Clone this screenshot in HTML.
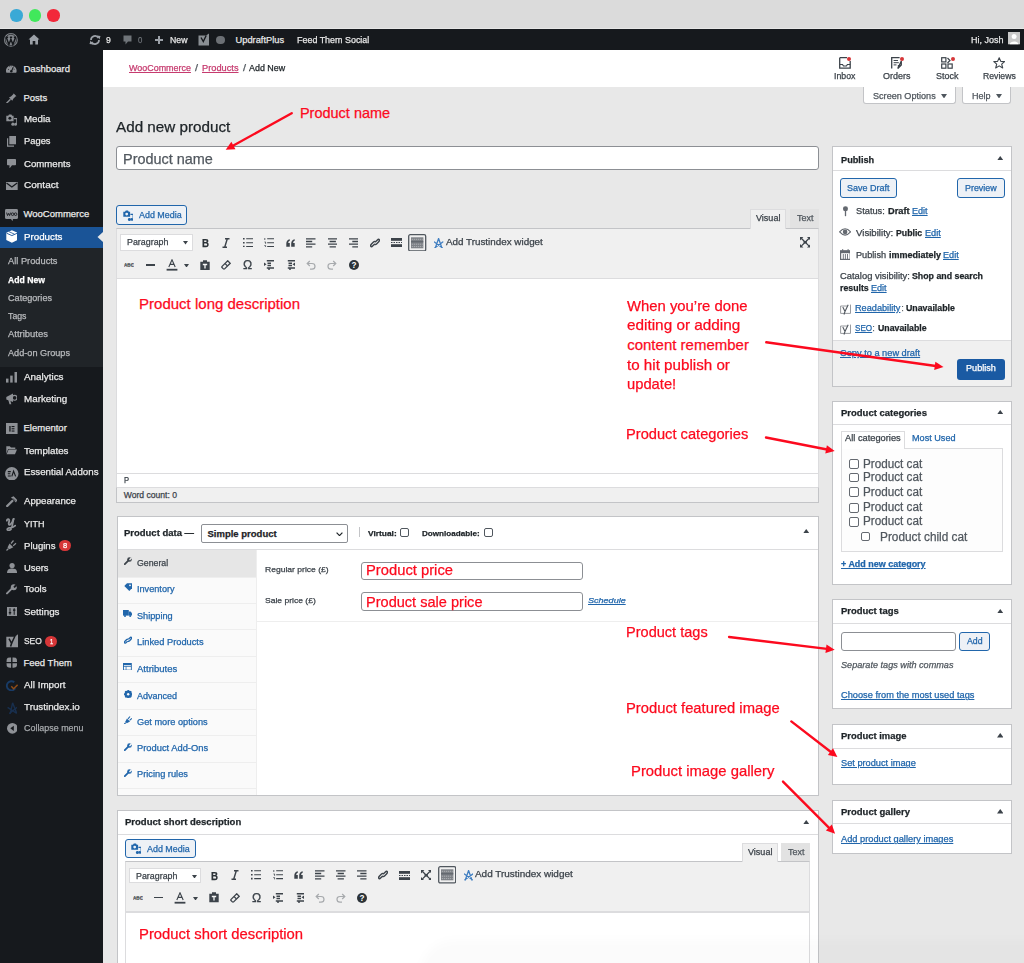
<!DOCTYPE html>
<html><head><meta charset="utf-8">
<style>
*{box-sizing:border-box;margin:0;padding:0}
html,body{width:1024px;height:963px;overflow:hidden}
body{font-family:"Liberation Sans",sans-serif;background:#e8e8e8;position:relative}
.a{position:absolute;white-space:nowrap;-webkit-text-stroke:0.25px currentColor}
svg.a{-webkit-text-stroke:0}

</style></head><body>
<div class="a" style="left:0.00px;top:0.00px;width:1024.00px;height:29.30px;background:#dbdbdb"></div>
<div class="a" style="left:0.00px;top:27.80px;width:1024.00px;height:1.50px;background:#e6e6e6"></div>
<div class="a" style="left:10.40px;top:9.40px;width:12.40px;height:12.40px;border-radius:50%;background:#3aa9d6"></div>
<div class="a" style="left:28.80px;top:9.40px;width:12.40px;height:12.40px;border-radius:50%;background:#41e85b"></div>
<div class="a" style="left:47.20px;top:9.40px;width:12.40px;height:12.40px;border-radius:50%;background:#f2283a"></div>
<div class="a" style="left:0.00px;top:29.30px;width:1024.00px;height:20.70px;background:#16191d"></div>
<svg class="a" style="left:4.10px;top:32.90px;" width="13.80" height="13.80" viewBox="0 0 13.8 13.8"><circle cx="6.9" cy="6.9" r="6.9" fill="#85898e"/><circle cx="6.9" cy="6.9" r="5.6" fill="none" stroke="#16191d" stroke-width="0.7"/><path d="M2.2 4.3 L4.9 11.6 L6.9 6.3 L8.9 11.6 L11.6 4.3 M1.6 4.3 H4.2 M5.8 4.3 H8.2 M9.8 4.3 H12" fill="none" stroke="#16191d" stroke-width="1.5"/></svg>
<svg class="a" style="left:28.00px;top:33.50px;" width="12.00" height="11.00" viewBox="0 0 12 11"><path d="M6 0.5 L11.5 5.5 L10 5.5 L10 10.5 L7.3 10.5 L7.3 7 L4.7 7 L4.7 10.5 L2 10.5 L2 5.5 L0.5 5.5 Z" fill="#9ca1a8"/></svg>
<svg class="a" style="left:89.00px;top:34.00px;" width="12.00" height="12.00" viewBox="0 0 12 12"><path d="M2 6 A4 4 0 0 1 9.5 4" fill="none" stroke="#9ca1a8" stroke-width="1.7"/><path d="M10 6 A4 4 0 0 1 2.5 8" fill="none" stroke="#9ca1a8" stroke-width="1.7"/><path d="M8 1.5 L11.5 2 L10.5 5.5 Z M4 10.5 L0.5 10 L1.5 6.5 Z" fill="#9ca1a8"/></svg>
<div class="a" style="left:105.70px;top:36.00px;font-size:9.30px;line-height:9.30px;color:#e8e8e8;transform:scaleX(0.9283);transform-origin:0 0;">9</div>
<svg class="a" style="left:122.50px;top:34.50px;" width="9.00" height="11.00" viewBox="0 0 9 11"><path d="M0.5 0.5 H8.5 V6.5 H5 L2.5 9.5 V6.5 H0.5 Z" fill="#6f7479"/></svg>
<div class="a" style="left:137.70px;top:36.00px;font-size:9.30px;line-height:9.30px;color:#6f7479;transform:scaleX(0.8316);transform-origin:0 0;">0</div>
<div class="a" style="left:154.90px;top:38.90px;width:8.40px;height:1.80px;background:#9ca1a8"></div>
<div class="a" style="left:158.20px;top:35.60px;width:1.80px;height:8.40px;background:#9ca1a8"></div>
<div class="a" style="left:169.50px;top:36.00px;font-size:9.30px;line-height:9.30px;color:#e8e8e8;transform:scaleX(0.9395);transform-origin:0 0;">New</div>
<svg class="a" style="left:197.80px;top:33.00px;" width="11.50" height="13.00" viewBox="0 0 11.5 13"><path d="M0.5 2.5 H8 L11 0.5 V12.5 H0.5 Z" fill="#8a8f94"/><path d="M3 4.5 L5.3 8.5 L8.2 2.5" fill="none" stroke="#16191d" stroke-width="1.4"/></svg>
<div class="a" style="left:216.20px;top:35.90px;width:8.40px;height:8.40px;border-radius:50%;background:#6c7075"></div>
<div class="a" style="left:235.50px;top:36.00px;font-size:9.30px;line-height:9.30px;color:#e8e8e8;">UpdraftPlus</div>
<div class="a" style="left:297.40px;top:36.00px;font-size:9.30px;line-height:9.30px;color:#e8e8e8;transform:scaleX(0.9601);transform-origin:0 0;">Feed Them Social</div>
<div class="a" style="left:970.90px;top:36.00px;font-size:9.30px;line-height:9.30px;color:#e8e8e8;transform:scaleX(0.9645);transform-origin:0 0;">Hi, Josh</div>
<svg class="a" style="left:1007.50px;top:32.30px;" width="12.30" height="12.30" viewBox="0 0 12.3 12.3"><rect width="12.3" height="12.3" fill="#c9c9c9"/><circle cx="6.15" cy="4.6" r="2.5" fill="#fff"/><path d="M1.8 12.3 C2 8.5 10.3 8.5 10.5 12.3 Z" fill="#fff"/></svg>
<div class="a" style="left:0.00px;top:50.00px;width:103.00px;height:913.00px;background:#16191d"></div>
<div class="a" style="left:0.00px;top:248.00px;width:103.00px;height:118.50px;background:#202428"></div>
<div class="a" style="left:0.00px;top:227.00px;width:103.00px;height:21.00px;background:#1a5497"></div>
<svg class="a" style="left:97.00px;top:232.00px;" width="6.00" height="10.00" viewBox="0 0 6 10"><path d="M6 0 L0.5 5 L6 10 Z" fill="#e8e8e8"/></svg>
<div class="a" style="left:23.50px;top:64.00px;font-size:9.50px;line-height:9.50px;color:#eaeaea;">Dashboard</div>
<div class="a" style="left:23.50px;top:93.00px;font-size:9.50px;line-height:9.50px;color:#eaeaea;">Posts</div>
<div class="a" style="left:23.50px;top:114.00px;font-size:9.50px;line-height:9.50px;color:#eaeaea;transform:scaleX(1.0237);transform-origin:0 0;">Media</div>
<div class="a" style="left:23.50px;top:136.00px;font-size:9.50px;line-height:9.50px;color:#eaeaea;transform:scaleX(0.9839);transform-origin:0 0;">Pages</div>
<div class="a" style="left:23.50px;top:159.00px;font-size:9.50px;line-height:9.50px;color:#eaeaea;transform:scaleX(1.0124);transform-origin:0 0;">Comments</div>
<div class="a" style="left:23.50px;top:180.00px;font-size:9.50px;line-height:9.50px;color:#eaeaea;transform:scaleX(1.0539);transform-origin:0 0;">Contact</div>
<div class="a" style="left:23.50px;top:209.00px;font-size:9.50px;line-height:9.50px;color:#eaeaea;">WooCommerce</div>
<div class="a" style="left:23.50px;top:232.00px;font-size:9.50px;line-height:9.50px;color:#ffffff;transform:scaleX(1.0270);transform-origin:0 0;">Products</div>
<div class="a" style="left:23.50px;top:372.00px;font-size:9.50px;line-height:9.50px;color:#eaeaea;transform:scaleX(1.0392);transform-origin:0 0;">Analytics</div>
<div class="a" style="left:23.50px;top:394.00px;font-size:9.50px;line-height:9.50px;color:#eaeaea;transform:scaleX(1.0356);transform-origin:0 0;">Marketing</div>
<div class="a" style="left:23.50px;top:423.00px;font-size:9.50px;line-height:9.50px;color:#eaeaea;">Elementor</div>
<div class="a" style="left:23.50px;top:446.00px;font-size:9.50px;line-height:9.50px;color:#eaeaea;transform:scaleX(1.0277);transform-origin:0 0;">Templates</div>
<div class="a" style="left:23.50px;top:467.00px;font-size:9.50px;line-height:9.50px;color:#eaeaea;transform:scaleX(1.0222);transform-origin:0 0;">Essential Addons</div>
<div class="a" style="left:23.50px;top:496.00px;font-size:9.50px;line-height:9.50px;color:#eaeaea;transform:scaleX(1.0130);transform-origin:0 0;">Appearance</div>
<div class="a" style="left:23.50px;top:519.00px;font-size:9.50px;line-height:9.50px;color:#eaeaea;transform:scaleX(0.9473);transform-origin:0 0;">YITH</div>
<div class="a" style="left:23.50px;top:541.00px;font-size:9.50px;line-height:9.50px;color:#eaeaea;transform:scaleX(1.0109);transform-origin:0 0;">Plugins</div>
<div class="a" style="left:23.50px;top:563.00px;font-size:9.50px;line-height:9.50px;color:#eaeaea;transform:scaleX(0.9877);transform-origin:0 0;">Users</div>
<div class="a" style="left:23.50px;top:584.00px;font-size:9.50px;line-height:9.50px;color:#eaeaea;transform:scaleX(1.0147);transform-origin:0 0;">Tools</div>
<div class="a" style="left:23.50px;top:607.00px;font-size:9.50px;line-height:9.50px;color:#eaeaea;transform:scaleX(1.0343);transform-origin:0 0;">Settings</div>
<div class="a" style="left:23.50px;top:636.00px;font-size:9.50px;line-height:9.50px;color:#eaeaea;transform:scaleX(0.8872);transform-origin:0 0;">SEO</div>
<div class="a" style="left:23.50px;top:658.00px;font-size:9.50px;line-height:9.50px;color:#eaeaea;">Feed Them</div>
<div class="a" style="left:23.50px;top:680.00px;font-size:9.50px;line-height:9.50px;color:#eaeaea;transform:scaleX(1.0344);transform-origin:0 0;">All Import</div>
<div class="a" style="left:23.50px;top:702.00px;font-size:9.50px;line-height:9.50px;color:#eaeaea;transform:scaleX(1.0326);transform-origin:0 0;">Trustindex.io</div>
<div class="a" style="left:23.50px;top:723.00px;font-size:9.50px;line-height:9.50px;color:#a7aaad;transform:scaleX(0.9390);transform-origin:0 0;">Collapse menu</div>
<div class="a" style="left:8.00px;top:257.00px;font-size:9.00px;line-height:9.00px;color:#b8babd;transform:scaleX(1.0309);transform-origin:0 0;">All Products</div>
<div class="a" style="left:8.00px;top:276.00px;font-size:9.00px;line-height:9.00px;color:#ffffff;font-weight:bold;transform:scaleX(0.9605);transform-origin:0 0;">Add New</div>
<div class="a" style="left:8.00px;top:294.00px;font-size:9.00px;line-height:9.00px;color:#b8babd;transform:scaleX(1.0109);transform-origin:0 0;">Categories</div>
<div class="a" style="left:8.00px;top:312.00px;font-size:9.00px;line-height:9.00px;color:#b8babd;transform:scaleX(0.9733);transform-origin:0 0;">Tags</div>
<div class="a" style="left:8.00px;top:330.00px;font-size:9.00px;line-height:9.00px;color:#b8babd;transform:scaleX(1.0522);transform-origin:0 0;">Attributes</div>
<div class="a" style="left:8.00px;top:349.00px;font-size:9.00px;line-height:9.00px;color:#b8babd;transform:scaleX(1.0158);transform-origin:0 0;">Add-on Groups</div>
<div class="a" style="left:59.00px;top:539.50px;width:11.50px;height:11.50px;border-radius:50%;background:#d63638"></div>
<div class="a" style="left:62.70px;top:542.00px;font-size:7.50px;line-height:7.50px;color:#fff;transform:scaleX(1.0072);transform-origin:0 0;">8</div>
<div class="a" style="left:45.30px;top:635.50px;width:11.50px;height:11.50px;border-radius:50%;background:#d63638"></div>
<div class="a" style="left:49.60px;top:638.00px;font-size:7.50px;line-height:7.50px;color:#fff;transform:scaleX(0.7674);transform-origin:0 0;">1</div>
<svg class="a" style="left:6.30px;top:64.30px;" width="10.60" height="8.80" viewBox="0 0 10.6 8.8"><path d="M0.4 8.8 A5.3 5.3 0 1 1 10.2 8.8 Z" fill="#8e9196"/><path d="M5.3 7.5 L7.3 3.2" stroke="#16191d" stroke-width="1.1"/><circle cx="5.3" cy="7.3" r="1.2" fill="#16191d"/><path d="M2 5.2 L2.9 5.6 M3.4 2.4 L3.9 3.1 M5.3 1.5 V2.4 M7.6 2.4 L7.1 3.1 M8.6 5.2 L7.7 5.6" stroke="#16191d" stroke-width="0.8"/></svg>
<svg class="a" style="left:6.20px;top:92.50px;" width="10.80" height="10.80" viewBox="0 0 10.8 10.8"><path d="M0.5 10.3 L4.5 6.3" stroke="#8e9196" stroke-width="1.4"/><path d="M3 4.5 L6.3 7.8 L7.3 5.8 L9.8 3.3 L10.5 3.3 L7.5 0.3 L7.5 1 L5 3.5 Z" fill="#8e9196"/></svg>
<svg class="a" style="left:5.90px;top:114.00px;" width="11.40" height="12.00" viewBox="0 0 11.4 12"><path d="M0.3 1.8 H2.2 L3 0.5 H5.4 L6.2 1.8 H7.6 V7.2 H0.3 Z" fill="#8e9196"/><circle cx="3.9" cy="4.3" r="1.5" fill="#16191d"/><path d="M7.9 4.6 H10.9 V10" stroke="#8e9196" stroke-width="1.3" fill="none"/><circle cx="6.9" cy="10.2" r="1.6" fill="#8e9196"/><circle cx="9.6" cy="10.2" r="1.5" fill="#8e9196"/></svg>
<svg class="a" style="left:6.90px;top:136.20px;" width="9.00" height="10.80" viewBox="0 0 9 10.8"><rect x="2.3" y="0" width="6.7" height="8.3" fill="#8e9196"/><path d="M0.6 2.3 V10.2 H7" stroke="#8e9196" stroke-width="1.2" fill="none"/></svg>
<svg class="a" style="left:6.90px;top:158.70px;" width="9.00" height="9.50" viewBox="0 0 9 9.5"><path d="M0 0.8 Q0 0 0.8 0 H8.2 Q9 0 9 0.8 V5.5 Q9 6.3 8.2 6.3 H5 L2.5 9.5 V6.3 H0.8 Q0 6.3 0 5.5 Z" fill="#8e9196"/></svg>
<svg class="a" style="left:6.20px;top:181.90px;" width="11.70" height="8.40" viewBox="0 0 11.7 8.4"><rect width="11.7" height="8.4" fill="#8e9196"/><path d="M0.5 1 L5.85 5 L11.2 1" stroke="#16191d" stroke-width="1.3" fill="none"/></svg>
<svg class="a" style="left:5.20px;top:209.00px;" width="13.00" height="12.20" viewBox="0 0 13 12.2"><rect x="0" y="0" width="13" height="10" rx="1.5" fill="#8e9196"/><path d="M6 10 L7.5 12.2 L8 10 Z" fill="#8e9196"/><path d="M1.6 3.6 L2.5 6.6 L3.6 4.4 L4.6 6.6 L5.6 3.6" fill="none" stroke="#16191d" stroke-width="0.9"/><circle cx="7.6" cy="5.2" r="1.3" fill="none" stroke="#16191d" stroke-width="0.9"/><circle cx="10.6" cy="5.2" r="1.3" fill="none" stroke="#16191d" stroke-width="0.9"/></svg>
<svg class="a" style="left:5.60px;top:229.80px;" width="11.80" height="13.00" viewBox="0 0 11.8 13"><path d="M5.9 0.3 L11.5 2.8 V10 L5.9 12.7 L0.3 10 V2.8 Z" fill="#fff"/><path d="M0.6 3.2 L5.9 5.6 L11.3 3.2" stroke="#1a5497" stroke-width="0.9" fill="none"/><path d="M3 1.7 L8.5 4.2" stroke="#1a5497" stroke-width="0.8"/></svg>
<svg class="a" style="left:6.10px;top:372.40px;" width="11.10" height="10.60" viewBox="0 0 11.1 10.6"><rect x="0" y="6.6" width="2.5" height="4" fill="#8e9196"/><rect x="4.2" y="3.6" width="2.5" height="7" fill="#8e9196"/><rect x="8.5" y="0" width="2.6" height="10.6" fill="#8e9196"/></svg>
<svg class="a" style="left:5.90px;top:393.30px;" width="11.40" height="11.60" viewBox="0 0 11.4 11.6"><path d="M0.3 4 L7 0.6 V9 L0.3 6.4 Z" fill="#8e9196"/><circle cx="8.6" cy="4.8" r="2.4" fill="none" stroke="#8e9196" stroke-width="1.1"/><path d="M2.3 6.8 L3.5 11.3 L5.3 11.3 L4.4 7.4" fill="#8e9196"/></svg>
<svg class="a" style="left:6.10px;top:422.50px;" width="11.60" height="11.60" viewBox="0 0 11.6 11.6"><rect width="11.6" height="11.6" fill="#8e9196"/><rect x="3.3" y="3" width="1.3" height="5.6" fill="#16191d"/><rect x="5.6" y="3" width="2.9" height="1.1" fill="#16191d"/><rect x="5.6" y="5.25" width="2.9" height="1.1" fill="#16191d"/><rect x="5.6" y="7.5" width="2.9" height="1.1" fill="#16191d"/></svg>
<svg class="a" style="left:6.00px;top:446.30px;" width="11.20" height="8.40" viewBox="0 0 11.2 8.4"><path d="M0.3 0.3 H3.8 L5 1.6 H9.3 V3 H2.2 L0.3 7.8 Z" fill="#8e9196"/><path d="M2.6 3.6 H11 L9 8.2 H0.6 Z" fill="#8e9196"/></svg>
<svg class="a" style="left:5.10px;top:466.80px;" width="13.50" height="13.50" viewBox="0 0 13.5 13.5"><circle cx="6.75" cy="6.75" r="6.75" fill="#8e9196"/><path d="M2.8 4.6 H5.8 M2.8 6.8 H5.3 M2.8 9 H5.8" stroke="#16191d" stroke-width="1.1"/><path d="M6.8 9.4 L8.6 4.2 L10.6 9.4" fill="none" stroke="#16191d" stroke-width="1.1"/></svg>
<svg class="a" style="left:5.80px;top:496.40px;" width="11.60" height="10.90" viewBox="0 0 11.6 10.9"><path d="M5 1.6 L7.6 0.3 L11.3 4 L10 6.6 Z" fill="#8e9196"/><path d="M6.6 2.2 L9.4 5" stroke="#16191d" stroke-width="0.7"/><path d="M6.3 5 L1.2 10" stroke="#8e9196" stroke-width="2.4" stroke-linecap="round"/></svg>
<svg class="a" style="left:6.40px;top:518.20px;" width="10.00" height="13.20" viewBox="0 0 10 13.2"><path d="M0.8 2.6 Q1.6 0.6 2.8 1.4 Q3.6 2 3 4 Q2.3 6.3 3.3 6.8 Q4.6 7.2 6.4 3.6 L7.6 0.9" fill="none" stroke="#8e9196" stroke-width="1.9" stroke-linecap="round"/><path d="M7.6 0.9 L6 8.8 Q5.2 12.4 2.6 12.4 Q1 12.3 1.3 11 Q2 9.8 4.8 9.6 Q7.5 9.3 9.3 7.6" fill="none" stroke="#8e9196" stroke-width="1.7" stroke-linecap="round"/></svg>
<svg class="a" style="left:6.40px;top:540.00px;" width="10.40" height="10.90" viewBox="0 0 10.4 10.9"><path d="M1.5 7.5 L3.5 3.5 L7.3 7.3 L3.4 9.3 Z" fill="#8e9196"/><path d="M0.5 10.5 L2.5 8.5 M5 3.5 L7.5 0.5 M7.2 5.8 L10 3.2" stroke="#8e9196" stroke-width="1.2"/></svg>
<svg class="a" style="left:6.50px;top:562.60px;" width="10.20" height="10.50" viewBox="0 0 10.2 10.5"><circle cx="5.1" cy="2.6" r="2.6" fill="#8e9196"/><path d="M0 10.5 C0 6.5 2 5.6 5.1 5.6 C8.2 5.6 10.2 6.5 10.2 10.5 Z" fill="#8e9196"/></svg>
<svg class="a" style="left:6.10px;top:584.40px;" width="11.10" height="10.40" viewBox="0 0 11.1 10.4"><path d="M1 9.4 L6 4.4" stroke="#8e9196" stroke-width="2" stroke-linecap="round"/><circle cx="7.8" cy="3.2" r="3" fill="#8e9196"/><path d="M7.4 2.8 L9.6 0.2 L11.2 1.8 L8.6 4" fill="#16191d"/></svg>
<svg class="a" style="left:7.00px;top:607.30px;" width="10.20" height="9.00" viewBox="0 0 10.2 9"><rect width="10.2" height="9" fill="#8e9196"/><path d="M3 1.2 V7.8 M7.2 1.2 V7.8" stroke="#16191d" stroke-width="1"/><rect x="1.8" y="5" width="2.4" height="1.4" fill="#16191d"/><rect x="6" y="2.4" width="2.4" height="1.4" fill="#16191d"/></svg>
<svg class="a" style="left:5.80px;top:633.80px;" width="12.40" height="14.20" viewBox="0 0 12.4 14.2"><path d="M0.3 2.8 H8.8 L12.1 0.3 V13.3 H0.3 Z" fill="#8e9196"/><path d="M3 4.6 L5.6 9.3 L9 2" fill="none" stroke="#16191d" stroke-width="1.5"/><path d="M5.6 9.3 L4.6 12.5" stroke="#16191d" stroke-width="1.5"/></svg>
<svg class="a" style="left:5.80px;top:657.40px;" width="11.60" height="11.30" viewBox="0 0 11.6 11.3"><path d="M0.8 2 Q1.5 0.3 5.1 0.6 V5 H0.5 Z M10.8 2 Q10.1 0.3 6.5 0.6 V5 H11.1 Z M0.8 9.3 Q1.5 11 5.1 10.7 V6.3 H0.5 Z M10.8 9.3 Q10.1 11 6.5 10.7 V6.3 H11.1 Z" fill="#8e9196"/></svg>
<svg class="a" style="left:5.10px;top:679.50px;" width="13.10" height="11.00" viewBox="0 0 13.1 11"><path d="M9.3 2.2 A4.6 4.6 0 1 0 10.3 8.3" fill="none" stroke="#183b66" stroke-width="1.9"/><path d="M6.3 6.3 L8.6 8.8 L12.6 4.8" fill="none" stroke="#8f4c17" stroke-width="1.4"/></svg>
<svg class="a" style="left:6.50px;top:702.00px;" width="10.70" height="12.50" viewBox="0 0 10.7 12.5"><path d="M5.6 0.8 L3.2 11.8 M5.6 0.8 L9.8 11.5 M0.6 5.4 L9.8 11.5 M10.2 5.2 L2.2 11.6" fill="none" stroke="#182f4e" stroke-width="1.4"/></svg>
<svg class="a" style="left:6.50px;top:723.40px;" width="10.70" height="10.70" viewBox="0 0 10.7 10.7"><circle cx="5.35" cy="5.35" r="5.35" fill="#8e9196"/><path d="M6.8 2.8 L3.3 5.35 L6.8 7.9 Z" fill="#16191d"/></svg>
<div class="a" style="left:103.00px;top:50.00px;width:921.00px;height:36.70px;background:#fff"></div>
<div class="a" style="left:128.75px;top:64.00px;font-size:9.00px;line-height:9.00px;color:#c63b6f;transform:scaleX(0.9936);transform-origin:0 0;text-decoration:underline;">WooCommerce</div>
<div class="a" style="left:195.20px;top:64.00px;font-size:9.00px;line-height:9.00px;color:#50575e;transform:scaleX(1.1990);transform-origin:0 0;">/</div>
<div class="a" style="left:201.80px;top:64.00px;font-size:9.00px;line-height:9.00px;color:#c63b6f;transform:scaleX(1.0278);transform-origin:0 0;text-decoration:underline;">Products</div>
<div class="a" style="left:242.60px;top:64.00px;font-size:9.00px;line-height:9.00px;color:#50575e;transform:scaleX(1.1990);transform-origin:0 0;">/</div>
<div class="a" style="left:249.00px;top:64.00px;font-size:9.00px;line-height:9.00px;color:#1d2327;transform:scaleX(0.9907);transform-origin:0 0;">Add New</div>
<svg class="a" style="left:839.20px;top:57.40px;" width="12.00" height="12.00" viewBox="0 0 12 12"><path d="M0.7 0.7 H8 M11.2 4 V11.2 H0.7 V0.7" fill="none" stroke="#3c434a" stroke-width="1.3"/><path d="M0.7 7.5 H3.5 L4.5 9 H7.4 L8.4 7.5 H11.2" fill="none" stroke="#3c434a" stroke-width="1.2"/></svg>
<div class="a" style="left:847.20px;top:56.90px;width:4.00px;height:4.00px;border-radius:50%;background:#d63638"></div>
<div class="a" style="left:833.80px;top:72.00px;font-size:8.50px;line-height:8.50px;color:#3c434a;transform:scaleX(1.0317);transform-origin:0 0;">Inbox</div>
<svg class="a" style="left:891.00px;top:57.40px;" width="11.00" height="12.20" viewBox="0 0 11 12.2"><path d="M0.7 11.5 V0.7 H8.6 M10.3 4 V8 L6.8 11.5 Z" fill="none" stroke="#3c434a" stroke-width="1.3"/><path d="M6.8 11.5 V8 H10.3 Z" fill="#3c434a"/><path d="M2.6 3.5 H7 M2.6 5.7 H7.8 M2.6 7.9 H5.5" stroke="#3c434a" stroke-width="1"/></svg>
<div class="a" style="left:899.60px;top:56.90px;width:4.00px;height:4.00px;border-radius:50%;background:#d63638"></div>
<div class="a" style="left:882.60px;top:72.00px;font-size:8.50px;line-height:8.50px;color:#3c434a;transform:scaleX(1.0548);transform-origin:0 0;">Orders</div>
<svg class="a" style="left:941.20px;top:57.40px;" width="12.20" height="12.00" viewBox="0 0 12.2 12"><rect x="0.7" y="0.7" width="4.2" height="4.2" fill="none" stroke="#3c434a" stroke-width="1.2"/><rect x="0.7" y="7" width="4.2" height="4.2" fill="none" stroke="#3c434a" stroke-width="1.2"/><rect x="7" y="7" width="4.2" height="4.2" fill="none" stroke="#3c434a" stroke-width="1.2"/><path d="M6.5 1 L9 3.5 L6.5 6" fill="none" stroke="#3c434a" stroke-width="1.2"/></svg>
<div class="a" style="left:950.60px;top:56.90px;width:4.00px;height:4.00px;border-radius:50%;background:#d63638"></div>
<div class="a" style="left:936.30px;top:72.00px;font-size:8.50px;line-height:8.50px;color:#3c434a;transform:scaleX(1.0576);transform-origin:0 0;">Stock</div>
<svg class="a" style="left:992.80px;top:57.00px;" width="12.40" height="12.00" viewBox="0 0 12.4 12"><path d="M6.2 0.8 L7.8 4.4 L11.6 4.6 L8.7 7.1 L9.7 11 L6.2 8.9 L2.7 11 L3.7 7.1 L0.8 4.6 L4.6 4.4 Z" fill="none" stroke="#3c434a" stroke-width="1.1" stroke-linejoin="round"/></svg>
<div class="a" style="left:982.60px;top:72.00px;font-size:8.50px;line-height:8.50px;color:#3c434a;transform:scaleX(1.0211);transform-origin:0 0;">Reviews</div>
<div class="a" style="left:862.70px;top:86.70px;width:93.70px;height:17.60px;background:#fff;border:1px solid #c3c4c7;border-top:0;border-radius:0 0 3px 3px"></div>
<div class="a" style="left:873.20px;top:92.00px;font-size:8.50px;line-height:8.50px;color:#50575e;transform:scaleX(1.0701);transform-origin:0 0;">Screen Options</div>
<svg class="a" style="left:941.00px;top:93.60px;" width="6.00" height="4.50" viewBox="0 0 6 4.5"><path d="M0 0 H6 L3 4.5 Z" fill="#50575e"/></svg>
<div class="a" style="left:961.70px;top:86.70px;width:49.80px;height:17.60px;background:#fff;border:1px solid #c3c4c7;border-top:0;border-radius:0 0 3px 3px"></div>
<div class="a" style="left:972.40px;top:92.00px;font-size:8.50px;line-height:8.50px;color:#50575e;transform:scaleX(1.0638);transform-origin:0 0;">Help</div>
<svg class="a" style="left:995.90px;top:93.60px;" width="6.00" height="4.50" viewBox="0 0 6 4.5"><path d="M0 0 H6 L3 4.5 Z" fill="#50575e"/></svg>
<div class="a" style="left:116.40px;top:120.00px;font-size:14.00px;line-height:14.00px;color:#1d2327;transform:scaleX(1.0878);transform-origin:0 0;">Add new product</div>
<div class="a" style="left:116.00px;top:146.30px;width:703.00px;height:24.00px;background:#fff;border:1px solid #8c8f94;border-radius:3px"></div>
<div class="a" style="left:123.20px;top:151.00px;font-size:15.00px;line-height:15.00px;color:#50575e;transform:scaleX(0.9626);transform-origin:0 0;">Product name</div>
<div class="a" style="left:116.20px;top:205.30px;width:70.60px;height:19.30px;background:#edf1f6;border:1px solid #2166ab;border-radius:3px"></div>
<svg class="a" style="left:122.50px;top:209.60px;" width="10.60" height="11.00" viewBox="0 0 10.6 11"><path d="M0.3 1.7 H2 L2.8 0.4 H5 L5.8 1.7 H7.1 V6.8 H0.3 Z" fill="#2166ab"/><circle cx="3.7" cy="4.1" r="1.4" fill="#edf1f6"/><path d="M7.4 4.4 H10.2 V9.3" stroke="#2166ab" stroke-width="1.2" fill="none"/><circle cx="6.4" cy="9.4" r="1.5" fill="#2166ab"/><circle cx="8.9" cy="9.4" r="1.4" fill="#2166ab"/></svg>
<div class="a" style="left:138.50px;top:211.00px;font-size:8.50px;line-height:8.50px;color:#2166ab;transform:scaleX(1.0505);transform-origin:0 0;">Add Media</div>
<div class="a" style="left:116.20px;top:228.00px;width:702.80px;height:50.50px;background:#f0f0f0;border:1px solid #dcdcde;border-top:1px solid #c3c4c7"></div>
<div class="a" style="left:116.20px;top:278.50px;width:702.80px;height:195.00px;background:#fff;border-left:1px solid #dcdcde;border-right:1px solid #dcdcde"></div>
<div class="a" style="left:120.20px;top:234.30px;width:72.40px;height:16.30px;background:#fff;border:1px solid #dcdcde"></div>
<div class="a" style="left:127.00px;top:238.00px;font-size:8.60px;line-height:8.60px;color:#3c434a;transform:scaleX(1.0333);transform-origin:0 0;">Paragraph</div>
<svg class="a" style="left:182.70px;top:241.30px;" width="5.00" height="3.60" viewBox="0 0 5 3.6"><path d="M0 0 H5 L2.5 3.6 Z" fill="#3c434a"/></svg>
<div class="a" style="left:750.30px;top:209.30px;width:35.90px;height:19.90px;background:#f0f0f0;border:1px solid #dcdcde;border-bottom:0"></div>
<div class="a" style="left:756.40px;top:214.00px;font-size:8.50px;line-height:8.50px;color:#3c434a;transform:scaleX(1.0608);transform-origin:0 0;">Visual</div>
<div class="a" style="left:790.00px;top:209.30px;width:29.00px;height:18.70px;background:#e2e2e2"></div>
<div class="a" style="left:796.70px;top:214.00px;font-size:8.50px;line-height:8.50px;color:#50575e;transform:scaleX(1.0584);transform-origin:0 0;">Text</div>
<div class="a" style="left:202.00px;top:238.00px;font-size:11.50px;line-height:11.50px;color:#2c3338;font-weight:bold;transform:scaleX(0.8431);transform-origin:0 0;">B</div>
<svg class="a" style="left:222.30px;top:237.60px;" width="8.00" height="10.00" viewBox="0 0 8 10"><path d="M3 0.7 H7.5 M0.5 9.3 H5 M5.3 0.7 L2.7 9.3" stroke="#3c434a" stroke-width="1.4" fill="none"/></svg>
<svg class="a" style="left:242.60px;top:237.90px;" width="10.00" height="9.40" viewBox="0 0 10 9.4"><path d="M0 0.8 H1.6 M0 4.7 H1.6 M0 8.6 H1.6" stroke="#3c434a" stroke-width="1.6"/><path d="M3.2 0.8 H10 M3.2 4.7 H10 M3.2 8.6 H10" stroke="#3c434a" stroke-width="1.1"/></svg>
<svg class="a" style="left:263.70px;top:237.90px;" width="10.00" height="9.40" viewBox="0 0 10 9.4"><path d="M0.8 0 V2 M0.5 4 H1.6 V5.8 M0.3 7.6 H1.6 V9.4" stroke="#3c434a" stroke-width="0.8" fill="none"/><path d="M3.2 0.8 H10 M3.2 4.7 H10 M3.2 8.6 H10" stroke="#3c434a" stroke-width="1.1"/></svg>
<svg class="a" style="left:285.50px;top:238.60px;" width="9.00" height="8.00" viewBox="0 0 9 8"><path d="M0.3 7.7 V4.5 Q0.3 1 3.8 0.3 V1.8 Q2.2 2.4 2.2 4 H3.8 V7.7 Z M5.2 7.7 V4.5 Q5.2 1 8.7 0.3 V1.8 Q7.1 2.4 7.1 4 H8.7 V7.7 Z" fill="#3c434a"/></svg>
<svg class="a" style="left:306.45px;top:237.60px;" width="9.50" height="10.00" viewBox="0 0 9.5 10"><path d="M0 0.8 H9.5 M0 3.5 H6.2 M0 6.2 H9.5 M0 8.9 H6.2 " stroke="#3c434a" stroke-width="1.3"/></svg>
<svg class="a" style="left:327.55px;top:237.60px;" width="9.50" height="10.00" viewBox="0 0 9.5 10"><path d="M0 0.8 H9.5 M1.6 3.5 H7.9 M0 6.2 H9.5 M1.6 8.9 H7.9 " stroke="#3c434a" stroke-width="1.3"/></svg>
<svg class="a" style="left:348.75px;top:237.60px;" width="9.50" height="10.00" viewBox="0 0 9.5 10"><path d="M0 0.8 H9.5 M3.3 3.5 H9.5 M0 6.2 H9.5 M3.3 8.9 H9.5 " stroke="#3c434a" stroke-width="1.3"/></svg>
<svg class="a" style="left:370.00px;top:237.60px;" width="10.00" height="10.00" viewBox="0 0 10 10"><path d="M4.2 6.5 L2.6 8.1 Q1.3 9.4 0.8 8.3 Q0.2 7.3 1.5 6 L3.5 4 Q4.5 3 5.5 3.8 M5.8 3.5 L7.4 1.9 Q8.7 0.6 9.3 1.7 Q9.8 2.7 8.5 4 L6.5 6 Q5.5 7 4.5 6.2" stroke="#3c434a" stroke-width="1.4" fill="none" stroke-linecap="round"/></svg>
<svg class="a" style="left:390.70px;top:238.10px;" width="11.00" height="9.00" viewBox="0 0 11 9"><rect x="0" y="0" width="11" height="2.8" fill="#3c434a"/><path d="M0 4.5 H11" stroke="#3c434a" stroke-width="1" stroke-dasharray="1.5 1"/><rect x="0" y="6.2" width="11" height="2.8" fill="#3c434a"/></svg>
<svg class="a" style="left:408.20px;top:233.80px;" width="18.40" height="17.60" viewBox="0 0 18.4 17.6"><rect x="0.7" y="0.7" width="17" height="16.2" rx="1.5" fill="#f0f0f0" stroke="#50575e" stroke-width="1.3"/><rect x="3" y="3.3" width="12.4" height="11" fill="#7d8186"/><path d="M3.8 5.3 H14.6 M3.8 10.2 H14.6 M3.8 12.6 H14.6" stroke="#c3c4c7" stroke-width="0.8" stroke-dasharray="1.1 0.9"/><path d="M3 7.8 H15.4" stroke="#50575e" stroke-width="0.8"/></svg>
<svg class="a" style="left:434.40px;top:237.60px;" width="9.20" height="10.60" viewBox="0 0 9.2 10.6"><path d="M4.6 0.5 L1.3 10 M4.6 0.5 L7.9 10 M0.4 4 L8.3 9.8 M8.8 4 L0.9 9.8" stroke="#3f7ec1" stroke-width="1.3" stroke-linecap="round" fill="none"/></svg>
<div class="a" style="left:445.80px;top:238.00px;font-size:9.00px;line-height:9.00px;color:#3c434a;transform:scaleX(1.0932);transform-origin:0 0;">Add Trustindex widget</div>
<svg class="a" style="left:800.00px;top:237.30px;" width="10.40" height="10.40" viewBox="0 0 10.4 10.4"><path d="M1.5 1.5 L8.9 8.9 M8.9 1.5 L1.5 8.9" stroke="#3c434a" stroke-width="1.3"/><path d="M0 0 H3.4 L0 3.4 Z M10.4 0 V3.4 L7 0 Z M0 10.4 V7 L3.4 10.4 Z M10.4 10.4 H7 L10.4 7 Z" fill="#3c434a"/><rect x="3.6" y="4" width="3.2" height="2.4" fill="#3c434a"/></svg>
<svg class="a" style="left:124.00px;top:261.80px;" width="10.00" height="6.00" viewBox="0 0 10 6"><text x="5" y="4.6" font-size="4.6" font-weight="bold" text-anchor="middle" fill="#3c434a" font-family="Liberation Sans">ABC</text><path d="M0.5 2.9 H9.5" stroke="#3c434a" stroke-width="0.6"/></svg>
<div class="a" style="left:145.80px;top:264.10px;width:9.20px;height:1.50px;background:#3c434a"></div>
<svg class="a" style="left:165.50px;top:259.00px;" width="12.00" height="12.00" viewBox="0 0 12 12"><path d="M2.8 8 L6 0.8 L9.2 8 M4 5.4 H8" stroke="#3c434a" stroke-width="1.1" fill="none"/><rect x="0.6" y="9.8" width="10.8" height="1.8" fill="#3c434a"/></svg>
<svg class="a" style="left:184.30px;top:263.80px;" width="5.00" height="3.60" viewBox="0 0 5 3.6"><path d="M0 0 H5 L2.5 3.6 Z" fill="#3c434a"/></svg>
<svg class="a" style="left:200.40px;top:259.50px;" width="10.00" height="10.60" viewBox="0 0 10 10.6"><path d="M0.3 1.8 H3 V0.3 H7 V1.8 H9.7 V10.3 H0.3 Z" fill="#3c434a"/><path d="M2.8 4.5 H7.2 M5 4.5 V8.5" stroke="#f6f7f7" stroke-width="1.3"/></svg>
<svg class="a" style="left:221.30px;top:259.80px;" width="10.00" height="10.00" viewBox="0 0 10 10"><path d="M6.7 0.8 L9.2 3.3 L3.6 8.9 Q3 9.5 2.4 8.9 L1 7.5 Q0.5 7 1.1 6.4 Z" stroke="#3c434a" stroke-width="1.3" fill="none"/><path d="M4 3.5 L6.5 6" stroke="#3c434a" stroke-width="1.1"/></svg>
<div class="a" style="left:243.00px;top:259.00px;font-size:12.00px;line-height:12.00px;color:#3c434a;transform:scaleX(1.0250);transform-origin:0 0;">Ω</div>
<svg class="a" style="left:263.70px;top:259.80px;" width="10.00" height="10.00" viewBox="0 0 10 10"><path d="M2.8 0.7 H10 M3.5 3.2 H7 M3.5 5.4 H7 M2.8 8 H10" stroke="#3c434a" stroke-width="1.5"/><path d="M5 8 V10" stroke="#3c434a" stroke-width="1.5"/><path d="M0 2.5 L2.5 4.2 L0 5.9 Z" fill="#3c434a"/></svg>
<svg class="a" style="left:285.00px;top:259.80px;" width="10.00" height="10.00" viewBox="0 0 10 10"><path d="M2.8 0.7 H10 M3.5 3.2 H7 M3.5 5.4 H7 M2.8 8 H10" stroke="#3c434a" stroke-width="1.5"/><path d="M5 8 V10" stroke="#3c434a" stroke-width="1.5"/><path d="M10 2.5 L7.5 4.2 L10 5.9 Z" fill="#3c434a"/></svg>
<svg class="a" style="left:306.20px;top:259.80px;" width="10.00" height="10.00" viewBox="0 0 10 10"><path d="M1.5 3.5 H6 Q9 3.5 9 6.3 Q9 9.2 6 9.2 H4" stroke="#a7aaad" stroke-width="1.2" fill="none"/><path d="M3.8 1 L1.2 3.5 L3.8 6" stroke="#a7aaad" stroke-width="1.2" fill="none"/></svg>
<svg class="a" style="left:327.30px;top:259.80px;" width="10.00" height="10.00" viewBox="0 0 10 10"><path d="M8.5 3.5 H4 Q1 3.5 1 6.3 Q1 9.2 4 9.2 H6" stroke="#a7aaad" stroke-width="1.2" fill="none"/><path d="M6.2 1 L8.8 3.5 L6.2 6" stroke="#a7aaad" stroke-width="1.2" fill="none"/></svg>
<svg class="a" style="left:348.50px;top:259.80px;" width="10.00" height="10.00" viewBox="0 0 10 10"><circle cx="5" cy="5" r="5" fill="#2c3338"/><text x="5" y="8.2" font-size="8.2" font-weight="bold" text-anchor="middle" fill="#fff" font-family="Liberation Sans">?</text></svg>
<div class="a" style="left:116.20px;top:473.20px;width:702.80px;height:14.30px;background:#fff;border:1px solid #dcdcde;border-bottom:0"></div>
<div class="a" style="left:123.70px;top:476.00px;font-size:8.80px;line-height:8.80px;color:#3c434a;transform:scaleX(0.8689);transform-origin:0 0;">P</div>
<div class="a" style="left:116.20px;top:487.30px;width:702.80px;height:16.20px;background:#f0f0f0;border:1px solid #c3c4c7;border-top:1px solid #dcdcde"></div>
<div class="a" style="left:123.70px;top:491.00px;font-size:8.60px;line-height:8.60px;color:#3c434a;">Word count: 0</div>
<div class="a" style="left:116.60px;top:516.40px;width:702.20px;height:279.60px;background:#fff;border:1px solid #c3c4c7"></div>
<div class="a" style="left:123.70px;top:529.00px;font-size:9.00px;line-height:9.00px;color:#1d2327;font-weight:bold;transform:scaleX(1.0525);transform-origin:0 0;">Product data —</div>
<div class="a" style="left:201.20px;top:524.30px;width:146.80px;height:18.40px;background:#fff;border:1px solid #8c8f94;border-radius:2px"></div>
<div class="a" style="left:207.50px;top:529.00px;font-size:9.50px;line-height:9.50px;color:#1d2327;font-weight:bold;">Simple product</div>
<svg class="a" style="left:335.50px;top:531.50px;" width="7.00" height="4.50" viewBox="0 0 7 4.5"><path d="M0.6 0.6 L3.5 3.6 L6.4 0.6" stroke="#1d2327" stroke-width="1.2" fill="none"/></svg>
<div class="a" style="left:359.20px;top:527.00px;width:0.90px;height:10.00px;background:#c3c4c7"></div>
<div class="a" style="left:367.70px;top:530.00px;font-size:8.00px;line-height:8.00px;color:#1d2327;font-weight:bold;transform:scaleX(1.0468);transform-origin:0 0;">Virtual:</div>
<div class="a" style="left:400.00px;top:528.20px;width:9.30px;height:9.30px;background:#fff;border:1px solid #50575e;border-radius:2px"></div>
<div class="a" style="left:422.40px;top:530.00px;font-size:8.00px;line-height:8.00px;color:#1d2327;font-weight:bold;transform:scaleX(1.0125);transform-origin:0 0;">Downloadable:</div>
<div class="a" style="left:484.00px;top:528.20px;width:9.30px;height:9.30px;background:#fff;border:1px solid #50575e;border-radius:2px"></div>
<svg class="a" style="left:803.30px;top:528.50px;" width="6.50" height="4.50" viewBox="0 0 6.5 4.5"><path d="M0 4.5 H6.5 L3.25 0 Z" fill="#3c434a"/></svg>
<div class="a" style="left:117.60px;top:549.00px;width:700.20px;height:1.00px;background:#dcdcde"></div>
<div class="a" style="left:117.60px;top:549.90px;width:139.20px;height:245.20px;background:#fafafa;border-right:1px solid #eee"></div>
<div class="a" style="left:117.60px;top:549.90px;width:138.40px;height:27.10px;background:#e6e6e6"></div>
<div class="a" style="left:117.60px;top:577.00px;width:138.40px;height:1.00px;background:#eee"></div>
<div class="a" style="left:117.60px;top:603.10px;width:138.40px;height:1.00px;background:#eee"></div>
<div class="a" style="left:117.60px;top:629.40px;width:138.40px;height:1.00px;background:#eee"></div>
<div class="a" style="left:117.60px;top:656.30px;width:138.40px;height:1.00px;background:#eee"></div>
<div class="a" style="left:117.60px;top:682.30px;width:138.40px;height:1.00px;background:#eee"></div>
<div class="a" style="left:117.60px;top:709.30px;width:138.40px;height:1.00px;background:#eee"></div>
<div class="a" style="left:117.60px;top:735.40px;width:138.40px;height:1.00px;background:#eee"></div>
<div class="a" style="left:117.60px;top:762.10px;width:138.40px;height:1.00px;background:#eee"></div>
<div class="a" style="left:117.60px;top:788.30px;width:138.40px;height:1.00px;background:#eee"></div>
<div class="a" style="left:136.90px;top:559.00px;font-size:8.50px;line-height:8.50px;color:#3c434a;transform:scaleX(1.0316);transform-origin:0 0;">General</div>
<svg class="a" style="left:123.80px;top:557.10px;" width="8.00" height="8.00" viewBox="0 0 8 8"><path d="M0.8 7.2 L4.3 3.7" stroke="#3c434a" stroke-width="1.8" stroke-linecap="round"/><circle cx="5.5" cy="2.5" r="2.3" fill="#3c434a"/><path d="M5 2.5 L7 0.2 L8 1.2 L6 3.5 Z" fill="#e6e6e6"/></svg>
<div class="a" style="left:136.90px;top:585.00px;font-size:8.50px;line-height:8.50px;color:#2166ab;transform:scaleX(1.0755);transform-origin:0 0;">Inventory</div>
<svg class="a" style="left:123.80px;top:583.20px;" width="8.50" height="8.20" viewBox="0 0 8.5 8.2"><path d="M0.3 3 L3 0.3 H8 V5.3 L5.3 8 Z" fill="#2166ab"/><circle cx="6" cy="2.3" r="0.9" fill="#fafafa"/></svg>
<div class="a" style="left:136.90px;top:612.00px;font-size:8.50px;line-height:8.50px;color:#2166ab;transform:scaleX(1.0791);transform-origin:0 0;">Shipping</div>
<svg class="a" style="left:123.20px;top:610.45px;" width="9.20" height="7.00" viewBox="0 0 9.2 7"><rect x="0" y="0" width="5.8" height="5.6" fill="#2166ab"/><path d="M5.8 1.6 H7.6 L9.2 3.4 V5.6 H5.8 Z" fill="#2166ab"/><circle cx="2" cy="6" r="1" fill="#2166ab"/><circle cx="7.2" cy="6" r="1" fill="#2166ab"/></svg>
<div class="a" style="left:136.90px;top:638.00px;font-size:8.50px;line-height:8.50px;color:#2166ab;transform:scaleX(1.0926);transform-origin:0 0;">Linked Products</div>
<svg class="a" style="left:123.80px;top:636.30px;" width="8.30" height="8.30" viewBox="0 0 8.3 8.3"><path d="M3.5 5.3 L2.2 6.6 Q1.2 7.6 0.7 6.8 Q0.2 6 1.2 5 L2.7 3.5 Q3.6 2.7 4.4 3.4 M4.6 3 L6 1.7 Q7 0.7 7.5 1.5 Q8 2.3 7 3.3 L5.6 4.8 Q4.7 5.6 3.9 4.9" stroke="#2166ab" stroke-width="1.3" fill="none"/></svg>
<div class="a" style="left:136.90px;top:665.00px;font-size:8.50px;line-height:8.50px;color:#2166ab;transform:scaleX(1.1224);transform-origin:0 0;">Attributes</div>
<svg class="a" style="left:123.40px;top:662.80px;" width="8.80" height="7.60" viewBox="0 0 8.8 7.6"><rect width="8.8" height="7.6" fill="#2166ab"/><rect x="0.9" y="2.2" width="7" height="0.9" fill="#fafafa"/><rect x="0.9" y="3.8" width="1.8" height="2.9" fill="#fafafa"/><rect x="3.4" y="3.8" width="4.5" height="2.9" fill="#fafafa"/></svg>
<div class="a" style="left:136.90px;top:692.00px;font-size:8.50px;line-height:8.50px;color:#2166ab;transform:scaleX(1.0606);transform-origin:0 0;">Advanced</div>
<svg class="a" style="left:123.60px;top:689.80px;" width="8.40" height="8.40" viewBox="0 0 8.4 8.4"><circle cx="4.2" cy="4.2" r="2.9" fill="none" stroke="#2166ab" stroke-width="1.8"/><path d="M4.2 0 V8.4 M0 4.2 H8.4 M1.2 1.2 L7.2 7.2 M7.2 1.2 L1.2 7.2" stroke="#2166ab" stroke-width="1.4"/><circle cx="4.2" cy="4.2" r="1.2" fill="#fafafa"/></svg>
<div class="a" style="left:136.90px;top:718.00px;font-size:8.50px;line-height:8.50px;color:#2166ab;transform:scaleX(1.0829);transform-origin:0 0;">Get more options</div>
<svg class="a" style="left:123.60px;top:716.10px;" width="8.40" height="8.40" viewBox="0 0 8.4 8.4"><path d="M1.2 5.8 L3 2.6 L6 5.6 L2.8 7.2 Z" fill="#2166ab"/><path d="M0.3 8.1 L1.8 6.6 M4 2.8 L6 0.5 M5.6 4.4 L7.9 2.4" stroke="#2166ab" stroke-width="1.1"/></svg>
<div class="a" style="left:136.90px;top:744.00px;font-size:8.50px;line-height:8.50px;color:#2166ab;transform:scaleX(1.0985);transform-origin:0 0;">Product Add-Ons</div>
<svg class="a" style="left:123.80px;top:742.50px;" width="8.00" height="8.00" viewBox="0 0 8 8"><path d="M0.8 7.2 L4.3 3.7" stroke="#2166ab" stroke-width="1.8" stroke-linecap="round"/><circle cx="5.5" cy="2.5" r="2.3" fill="#2166ab"/><path d="M5 2.5 L7 0.2 L8 1.2 L6 3.5 Z" fill="#fafafa"/></svg>
<div class="a" style="left:136.90px;top:770.00px;font-size:8.50px;line-height:8.50px;color:#2166ab;transform:scaleX(1.0884);transform-origin:0 0;">Pricing rules</div>
<svg class="a" style="left:123.80px;top:768.60px;" width="8.00" height="8.00" viewBox="0 0 8 8"><path d="M0.8 7.2 L4.3 3.7" stroke="#2166ab" stroke-width="1.8" stroke-linecap="round"/><circle cx="5.5" cy="2.5" r="2.3" fill="#2166ab"/><path d="M5 2.5 L7 0.2 L8 1.2 L6 3.5 Z" fill="#fafafa"/></svg>
<div class="a" style="left:265.20px;top:566.00px;font-size:8.00px;line-height:8.00px;color:#3c434a;transform:scaleX(1.0692);transform-origin:0 0;">Regular price (£)</div>
<div class="a" style="left:361.10px;top:561.50px;width:221.70px;height:18.30px;background:#fff;border:1px solid #8c8f94;border-radius:3px"></div>
<div class="a" style="left:265.20px;top:597.00px;font-size:8.00px;line-height:8.00px;color:#3c434a;transform:scaleX(1.0678);transform-origin:0 0;">Sale price (£)</div>
<div class="a" style="left:361.10px;top:592.40px;width:221.70px;height:18.30px;background:#fff;border:1px solid #8c8f94;border-radius:3px"></div>
<div class="a" style="left:587.70px;top:597.00px;font-size:8.00px;line-height:8.00px;color:#2166ab;font-style:italic;transform:scaleX(1.1301);transform-origin:0 0;text-decoration:underline;">Schedule</div>
<div class="a" style="left:256.80px;top:620.70px;width:561.00px;height:1.00px;background:#eee"></div>
<div class="a" style="left:116.80px;top:809.90px;width:702.00px;height:160.00px;background:#fff;border:1px solid #c3c4c7"></div>
<div class="a" style="left:125.00px;top:818.00px;font-size:9.00px;line-height:9.00px;color:#1d2327;font-weight:bold;transform:scaleX(1.0563);transform-origin:0 0;">Product short description</div>
<svg class="a" style="left:803.40px;top:819.60px;" width="6.50" height="4.50" viewBox="0 0 6.5 4.5"><path d="M0 4.5 H6.5 L3.25 0 Z" fill="#3c434a"/></svg>
<div class="a" style="left:117.80px;top:833.80px;width:700.00px;height:1.00px;background:#dcdcde"></div>
<div class="a" style="left:124.60px;top:838.70px;width:71.30px;height:18.90px;background:#edf1f6;border:1px solid #2166ab;border-radius:3px"></div>
<svg class="a" style="left:130.90px;top:843.00px;" width="10.60" height="11.00" viewBox="0 0 10.6 11"><path d="M0.3 1.7 H2 L2.8 0.4 H5 L5.8 1.7 H7.1 V6.8 H0.3 Z" fill="#2166ab"/><circle cx="3.7" cy="4.1" r="1.4" fill="#edf1f6"/><path d="M7.4 4.4 H10.2 V9.3" stroke="#2166ab" stroke-width="1.2" fill="none"/><circle cx="6.4" cy="9.4" r="1.5" fill="#2166ab"/><circle cx="8.9" cy="9.4" r="1.4" fill="#2166ab"/></svg>
<div class="a" style="left:146.90px;top:845.00px;font-size:8.50px;line-height:8.50px;color:#2166ab;transform:scaleX(1.0505);transform-origin:0 0;">Add Media</div>
<div class="a" style="left:125.20px;top:861.10px;width:685.00px;height:50.50px;background:#f0f0f0;border:1px solid #dcdcde;border-top:1px solid #c3c4c7"></div>
<div class="a" style="left:125.20px;top:911.60px;width:685.00px;height:60.00px;background:#fff;border-left:1px solid #dcdcde;border-right:1px solid #dcdcde;border-top:1px solid #dcdcde"></div>
<div class="a" style="left:129.00px;top:867.60px;width:72.40px;height:15.00px;background:#fff;border:1px solid #dcdcde"></div>
<div class="a" style="left:135.80px;top:872.00px;font-size:8.60px;line-height:8.60px;color:#3c434a;transform:scaleX(1.0333);transform-origin:0 0;">Paragraph</div>
<svg class="a" style="left:191.50px;top:874.60px;" width="5.00" height="3.60" viewBox="0 0 5 3.6"><path d="M0 0 H5 L2.5 3.6 Z" fill="#3c434a"/></svg>
<div class="a" style="left:741.50px;top:843.10px;width:36.40px;height:18.90px;background:#f0f0f0;border:1px solid #dcdcde;border-bottom:0"></div>
<div class="a" style="left:747.60px;top:848.00px;font-size:8.50px;line-height:8.50px;color:#3c434a;transform:scaleX(1.0608);transform-origin:0 0;">Visual</div>
<div class="a" style="left:781.00px;top:843.10px;width:29.20px;height:18.00px;background:#e2e2e2"></div>
<div class="a" style="left:787.70px;top:848.00px;font-size:8.50px;line-height:8.50px;color:#50575e;transform:scaleX(1.0584);transform-origin:0 0;">Text</div>
<div class="a" style="left:210.60px;top:871.00px;font-size:11.50px;line-height:11.50px;color:#2c3338;font-weight:bold;transform:scaleX(0.8431);transform-origin:0 0;">B</div>
<svg class="a" style="left:231.20px;top:870.00px;" width="8.00" height="10.00" viewBox="0 0 8 10"><path d="M3 0.7 H7.5 M0.5 9.3 H5 M5.3 0.7 L2.7 9.3" stroke="#3c434a" stroke-width="1.4" fill="none"/></svg>
<svg class="a" style="left:251.40px;top:870.30px;" width="10.00" height="9.40" viewBox="0 0 10 9.4"><path d="M0 0.8 H1.6 M0 4.7 H1.6 M0 8.6 H1.6" stroke="#3c434a" stroke-width="1.6"/><path d="M3.2 0.8 H10 M3.2 4.7 H10 M3.2 8.6 H10" stroke="#3c434a" stroke-width="1.1"/></svg>
<svg class="a" style="left:272.80px;top:870.30px;" width="10.00" height="9.40" viewBox="0 0 10 9.4"><path d="M0.8 0 V2 M0.5 4 H1.6 V5.8 M0.3 7.6 H1.6 V9.4" stroke="#3c434a" stroke-width="0.8" fill="none"/><path d="M3.2 0.8 H10 M3.2 4.7 H10 M3.2 8.6 H10" stroke="#3c434a" stroke-width="1.1"/></svg>
<svg class="a" style="left:294.10px;top:871.00px;" width="9.00" height="8.00" viewBox="0 0 9 8"><path d="M0.3 7.7 V4.5 Q0.3 1 3.8 0.3 V1.8 Q2.2 2.4 2.2 4 H3.8 V7.7 Z M5.2 7.7 V4.5 Q5.2 1 8.7 0.3 V1.8 Q7.1 2.4 7.1 4 H8.7 V7.7 Z" fill="#3c434a"/></svg>
<svg class="a" style="left:315.05px;top:870.00px;" width="9.50" height="10.00" viewBox="0 0 9.5 10"><path d="M0 0.8 H9.5 M0 3.5 H6.2 M0 6.2 H9.5 M0 8.9 H6.2 " stroke="#3c434a" stroke-width="1.3"/></svg>
<svg class="a" style="left:336.15px;top:870.00px;" width="9.50" height="10.00" viewBox="0 0 9.5 10"><path d="M0 0.8 H9.5 M1.6 3.5 H7.9 M0 6.2 H9.5 M1.6 8.9 H7.9 " stroke="#3c434a" stroke-width="1.3"/></svg>
<svg class="a" style="left:357.45px;top:870.00px;" width="9.50" height="10.00" viewBox="0 0 9.5 10"><path d="M0 0.8 H9.5 M3.3 3.5 H9.5 M0 6.2 H9.5 M3.3 8.9 H9.5 " stroke="#3c434a" stroke-width="1.3"/></svg>
<svg class="a" style="left:378.30px;top:870.00px;" width="10.00" height="10.00" viewBox="0 0 10 10"><path d="M4.2 6.5 L2.6 8.1 Q1.3 9.4 0.8 8.3 Q0.2 7.3 1.5 6 L3.5 4 Q4.5 3 5.5 3.8 M5.8 3.5 L7.4 1.9 Q8.7 0.6 9.3 1.7 Q9.8 2.7 8.5 4 L6.5 6 Q5.5 7 4.5 6.2" stroke="#3c434a" stroke-width="1.4" fill="none" stroke-linecap="round"/></svg>
<svg class="a" style="left:399.30px;top:870.50px;" width="11.00" height="9.00" viewBox="0 0 11 9"><rect x="0" y="0" width="11" height="2.8" fill="#3c434a"/><path d="M0 4.5 H11" stroke="#3c434a" stroke-width="1" stroke-dasharray="1.5 1"/><rect x="0" y="6.2" width="11" height="2.8" fill="#3c434a"/></svg>
<svg class="a" style="left:420.80px;top:869.80px;" width="10.40" height="10.40" viewBox="0 0 10.4 10.4"><path d="M1.5 1.5 L8.9 8.9 M8.9 1.5 L1.5 8.9" stroke="#3c434a" stroke-width="1.3"/><path d="M0 0 H3.4 L0 3.4 Z M10.4 0 V3.4 L7 0 Z M0 10.4 V7 L3.4 10.4 Z M10.4 10.4 H7 L10.4 7 Z" fill="#3c434a"/><rect x="3.6" y="4" width="3.2" height="2.4" fill="#3c434a"/></svg>
<svg class="a" style="left:437.80px;top:866.20px;" width="18.40" height="17.60" viewBox="0 0 18.4 17.6"><rect x="0.7" y="0.7" width="17" height="16.2" rx="1.5" fill="#f0f0f0" stroke="#50575e" stroke-width="1.3"/><rect x="3" y="3.3" width="12.4" height="11" fill="#7d8186"/><path d="M3.8 5.3 H14.6 M3.8 10.2 H14.6 M3.8 12.6 H14.6" stroke="#c3c4c7" stroke-width="0.8" stroke-dasharray="1.1 0.9"/><path d="M3 7.8 H15.4" stroke="#50575e" stroke-width="0.8"/></svg>
<svg class="a" style="left:464.00px;top:870.00px;" width="9.20" height="10.60" viewBox="0 0 9.2 10.6"><path d="M4.6 0.5 L1.3 10 M4.6 0.5 L7.9 10 M0.4 4 L8.3 9.8 M8.8 4 L0.9 9.8" stroke="#3f7ec1" stroke-width="1.3" stroke-linecap="round" fill="none"/></svg>
<div class="a" style="left:475.00px;top:870.00px;font-size:9.00px;line-height:9.00px;color:#3c434a;transform:scaleX(1.1033);transform-origin:0 0;">Add Trustindex widget</div>
<svg class="a" style="left:132.90px;top:894.50px;" width="10.00" height="6.00" viewBox="0 0 10 6"><text x="5" y="4.6" font-size="4.6" font-weight="bold" text-anchor="middle" fill="#3c434a" font-family="Liberation Sans">ABC</text><path d="M0.5 2.9 H9.5" stroke="#3c434a" stroke-width="0.6"/></svg>
<div class="a" style="left:154.20px;top:896.80px;width:9.20px;height:1.50px;background:#3c434a"></div>
<svg class="a" style="left:174.30px;top:891.70px;" width="12.00" height="12.00" viewBox="0 0 12 12"><path d="M2.8 8 L6 0.8 L9.2 8 M4 5.4 H8" stroke="#3c434a" stroke-width="1.1" fill="none"/><rect x="0.6" y="9.8" width="10.8" height="1.8" fill="#3c434a"/></svg>
<svg class="a" style="left:193.10px;top:896.50px;" width="5.00" height="3.60" viewBox="0 0 5 3.6"><path d="M0 0 H5 L2.5 3.6 Z" fill="#3c434a"/></svg>
<svg class="a" style="left:209.00px;top:892.20px;" width="10.00" height="10.60" viewBox="0 0 10 10.6"><path d="M0.3 1.8 H3 V0.3 H7 V1.8 H9.7 V10.3 H0.3 Z" fill="#3c434a"/><path d="M2.8 4.5 H7.2 M5 4.5 V8.5" stroke="#f6f7f7" stroke-width="1.3"/></svg>
<svg class="a" style="left:230.20px;top:892.50px;" width="10.00" height="10.00" viewBox="0 0 10 10"><path d="M6.7 0.8 L9.2 3.3 L3.6 8.9 Q3 9.5 2.4 8.9 L1 7.5 Q0.5 7 1.1 6.4 Z" stroke="#3c434a" stroke-width="1.3" fill="none"/><path d="M4 3.5 L6.5 6" stroke="#3c434a" stroke-width="1.1"/></svg>
<div class="a" style="left:251.80px;top:892.00px;font-size:12.00px;line-height:12.00px;color:#3c434a;transform:scaleX(1.0250);transform-origin:0 0;">Ω</div>
<svg class="a" style="left:272.80px;top:892.50px;" width="10.00" height="10.00" viewBox="0 0 10 10"><path d="M2.8 0.7 H10 M3.5 3.2 H7 M3.5 5.4 H7 M2.8 8 H10" stroke="#3c434a" stroke-width="1.5"/><path d="M5 8 V10" stroke="#3c434a" stroke-width="1.5"/><path d="M0 2.5 L2.5 4.2 L0 5.9 Z" fill="#3c434a"/></svg>
<svg class="a" style="left:293.60px;top:892.50px;" width="10.00" height="10.00" viewBox="0 0 10 10"><path d="M2.8 0.7 H10 M3.5 3.2 H7 M3.5 5.4 H7 M2.8 8 H10" stroke="#3c434a" stroke-width="1.5"/><path d="M5 8 V10" stroke="#3c434a" stroke-width="1.5"/><path d="M10 2.5 L7.5 4.2 L10 5.9 Z" fill="#3c434a"/></svg>
<svg class="a" style="left:314.80px;top:892.50px;" width="10.00" height="10.00" viewBox="0 0 10 10"><path d="M1.5 3.5 H6 Q9 3.5 9 6.3 Q9 9.2 6 9.2 H4" stroke="#a7aaad" stroke-width="1.2" fill="none"/><path d="M3.8 1 L1.2 3.5 L3.8 6" stroke="#a7aaad" stroke-width="1.2" fill="none"/></svg>
<svg class="a" style="left:335.90px;top:892.50px;" width="10.00" height="10.00" viewBox="0 0 10 10"><path d="M8.5 3.5 H4 Q1 3.5 1 6.3 Q1 9.2 4 9.2 H6" stroke="#a7aaad" stroke-width="1.2" fill="none"/><path d="M6.2 1 L8.8 3.5 L6.2 6" stroke="#a7aaad" stroke-width="1.2" fill="none"/></svg>
<svg class="a" style="left:357.20px;top:892.50px;" width="10.00" height="10.00" viewBox="0 0 10 10"><circle cx="5" cy="5" r="5" fill="#2c3338"/><text x="5" y="8.2" font-size="8.2" font-weight="bold" text-anchor="middle" fill="#fff" font-family="Liberation Sans">?</text></svg>
<div class="a" style="left:832.20px;top:146.40px;width:179.70px;height:240.20px;background:#fff;border:1px solid #c3c4c7"></div>
<div class="a" style="left:833.20px;top:170.30px;width:177.70px;height:1.00px;background:#dcdcde"></div>
<div class="a" style="left:841.00px;top:156.00px;font-size:9.00px;line-height:9.00px;color:#1d2327;font-weight:bold;transform:scaleX(1.0216);transform-origin:0 0;">Publish</div>
<svg class="a" style="left:996.60px;top:155.75px;" width="6.50" height="4.50" viewBox="0 0 6.5 4.5"><path d="M0 4.5 H6.5 L3.25 0 Z" fill="#3c434a"/></svg>
<div class="a" style="left:839.60px;top:178.10px;width:57.60px;height:19.50px;background:#edf1f6;border:1px solid #2166ab;border-radius:3px"></div>
<div class="a" style="left:846.90px;top:184.00px;font-size:8.50px;line-height:8.50px;color:#2166ab;transform:scaleX(1.0584);transform-origin:0 0;">Save Draft</div>
<div class="a" style="left:957.40px;top:178.10px;width:47.30px;height:19.50px;background:#edf1f6;border:1px solid #2166ab;border-radius:3px"></div>
<div class="a" style="left:965.20px;top:184.00px;font-size:8.50px;line-height:8.50px;color:#2166ab;transform:scaleX(1.0476);transform-origin:0 0;">Preview</div>
<svg class="a" style="left:841.60px;top:206.20px;" width="7.00" height="10.40" viewBox="0 0 7 10.4"><circle cx="3.5" cy="2.7" r="2.5" fill="#646970"/><path d="M3.5 4 V10.2" stroke="#646970" stroke-width="1.3"/></svg>
<div class="a" style="left:856.20px;top:207.00px;font-size:8.50px;line-height:8.50px;color:#3c434a;transform:scaleX(1.0884);transform-origin:0 0;">Status:</div>
<div class="a" style="left:887.90px;top:207.00px;font-size:8.50px;line-height:8.50px;color:#1d2327;font-weight:bold;transform:scaleX(1.0888);transform-origin:0 0;">Draft</div>
<div class="a" style="left:911.90px;top:207.00px;font-size:8.50px;line-height:8.50px;color:#2166ab;transform:scaleX(1.0652);transform-origin:0 0;text-decoration:underline;">Edit</div>
<svg class="a" style="left:839.20px;top:228.40px;" width="12.20" height="7.80" viewBox="0 0 12.2 7.8"><path d="M0.6 3.9 Q6.1 -2.4 11.6 3.9 Q6.1 10.2 0.6 3.9 Z" fill="none" stroke="#646970" stroke-width="1.2"/><circle cx="6.1" cy="3.9" r="2.3" fill="#646970"/></svg>
<div class="a" style="left:856.20px;top:229.00px;font-size:8.50px;line-height:8.50px;color:#3c434a;transform:scaleX(1.1333);transform-origin:0 0;">Visibility:</div>
<div class="a" style="left:896.30px;top:229.00px;font-size:8.50px;line-height:8.50px;color:#1d2327;font-weight:bold;transform:scaleX(1.0271);transform-origin:0 0;">Public</div>
<div class="a" style="left:925.00px;top:229.00px;font-size:8.50px;line-height:8.50px;color:#2166ab;transform:scaleX(1.0788);transform-origin:0 0;text-decoration:underline;">Edit</div>
<svg class="a" style="left:839.60px;top:248.60px;" width="10.80" height="11.00" viewBox="0 0 10.8 11"><rect x="0.6" y="1.8" width="9.6" height="8.6" fill="none" stroke="#646970" stroke-width="1.2"/><rect x="0.6" y="1.8" width="9.6" height="2.4" fill="#646970"/><path d="M2.7 0 V2.5 M8.1 0 V2.5 M3.3 5 V10 M5.4 5 V10 M7.5 5 V10" stroke="#646970" stroke-width="0.9"/></svg>
<div class="a" style="left:856.20px;top:251.00px;font-size:8.50px;line-height:8.50px;color:#3c434a;transform:scaleX(1.0796);transform-origin:0 0;">Publish</div>
<div class="a" style="left:888.80px;top:251.00px;font-size:8.50px;line-height:8.50px;color:#1d2327;font-weight:bold;transform:scaleX(1.0584);transform-origin:0 0;">immediately</div>
<div class="a" style="left:943.10px;top:251.00px;font-size:8.50px;line-height:8.50px;color:#2166ab;transform:scaleX(1.0720);transform-origin:0 0;text-decoration:underline;">Edit</div>
<div class="a" style="left:839.60px;top:272.00px;font-size:8.50px;line-height:8.50px;color:#3c434a;transform:scaleX(1.1043);transform-origin:0 0;">Catalog visibility:</div>
<div class="a" style="left:912.30px;top:272.00px;font-size:8.50px;line-height:8.50px;color:#1d2327;font-weight:bold;transform:scaleX(1.0351);transform-origin:0 0;">Shop and search</div>
<div class="a" style="left:839.60px;top:284.00px;font-size:8.50px;line-height:8.50px;color:#1d2327;font-weight:bold;transform:scaleX(1.0297);transform-origin:0 0;">results</div>
<div class="a" style="left:871.30px;top:284.00px;font-size:8.50px;line-height:8.50px;color:#2166ab;transform:scaleX(1.0652);transform-origin:0 0;text-decoration:underline;">Edit</div>
<svg class="a" style="left:839.60px;top:304.00px;" width="11.20" height="10.50" viewBox="0 0 11.2 10.5"><path d="M0.6 2 H7.5 M10.5 0.6 V9.4 H0.6 V2" fill="none" stroke="#8c8f94" stroke-width="0.9"/><path d="M2.8 3 L5 7.5 L8.2 0.8 M5 7.5 L4 10.5" fill="none" stroke="#50575e" stroke-width="1.1"/></svg>
<div class="a" style="left:855.25px;top:304.00px;font-size:8.50px;line-height:8.50px;color:#2166ab;transform:scaleX(1.0785);transform-origin:0 0;text-decoration:underline;">Readability</div>
<div class="a" style="left:901.50px;top:304.00px;font-size:8.50px;line-height:8.50px;color:#1d2327;transform:scaleX(0.6348);transform-origin:0 0;">:</div>
<div class="a" style="left:906.00px;top:304.00px;font-size:8.50px;line-height:8.50px;color:#1d2327;font-weight:bold;transform:scaleX(1.0351);transform-origin:0 0;">Unavailable</div>
<svg class="a" style="left:839.60px;top:324.00px;" width="11.20" height="10.50" viewBox="0 0 11.2 10.5"><path d="M0.6 2 H7.5 M10.5 0.6 V9.4 H0.6 V2" fill="none" stroke="#8c8f94" stroke-width="0.9"/><path d="M2.8 3 L5 7.5 L8.2 0.8 M5 7.5 L4 10.5" fill="none" stroke="#50575e" stroke-width="1.1"/></svg>
<div class="a" style="left:855.25px;top:324.00px;font-size:8.50px;line-height:8.50px;color:#2166ab;transform:scaleX(0.9553);transform-origin:0 0;text-decoration:underline;">SEO</div>
<div class="a" style="left:873.30px;top:324.00px;font-size:8.50px;line-height:8.50px;color:#1d2327;transform:scaleX(0.6348);transform-origin:0 0;">:</div>
<div class="a" style="left:878.30px;top:324.00px;font-size:8.50px;line-height:8.50px;color:#1d2327;font-weight:bold;transform:scaleX(1.0287);transform-origin:0 0;">Unavailable</div>
<div class="a" style="left:833.20px;top:340.20px;width:177.70px;height:45.40px;background:#f0f0f0;border-top:1px solid #dcdcde"></div>
<div class="a" style="left:839.60px;top:349.00px;font-size:8.50px;line-height:8.50px;color:#2166ab;transform:scaleX(1.0868);transform-origin:0 0;text-decoration:underline;">Copy to a new draft</div>
<div class="a" style="left:957.40px;top:358.90px;width:47.30px;height:20.90px;background:#1a5aa3;border-radius:3px"></div>
<div class="a" style="left:966.00px;top:364.00px;font-size:8.50px;line-height:8.50px;color:#fff;transform:scaleX(1.0725);transform-origin:0 0;">Publish</div>
<div class="a" style="left:832.20px;top:400.70px;width:179.70px;height:184.70px;background:#fff;border:1px solid #c3c4c7"></div>
<div class="a" style="left:833.20px;top:424.10px;width:177.70px;height:1.00px;background:#dcdcde"></div>
<div class="a" style="left:841.00px;top:409.00px;font-size:9.00px;line-height:9.00px;color:#1d2327;font-weight:bold;transform:scaleX(1.0537);transform-origin:0 0;">Product categories</div>
<svg class="a" style="left:996.60px;top:409.80px;" width="6.50" height="4.50" viewBox="0 0 6.5 4.5"><path d="M0 4.5 H6.5 L3.25 0 Z" fill="#3c434a"/></svg>
<div class="a" style="left:841.00px;top:431.10px;width:63.50px;height:17.60px;background:#fff;border:1px solid #dcdcde;border-bottom:0"></div>
<div class="a" style="left:844.90px;top:434.00px;font-size:8.50px;line-height:8.50px;color:#3c434a;transform:scaleX(1.0916);transform-origin:0 0;">All categories</div>
<div class="a" style="left:911.90px;top:434.00px;font-size:8.50px;line-height:8.50px;color:#2166ab;transform:scaleX(1.0709);transform-origin:0 0;">Most Used</div>
<div class="a" style="left:841.00px;top:448.30px;width:162.30px;height:103.50px;background:#fdfdfd;border:1px solid #dcdcde"></div>
<div class="a" style="left:841.80px;top:447.60px;width:62.00px;height:1.50px;background:#fff"></div>
<div class="a" style="left:849.00px;top:459.00px;width:9.80px;height:9.80px;background:#fff;border:1px solid #646970;border-radius:2px"></div>
<div class="a" style="left:863.00px;top:458.00px;font-size:12.00px;line-height:12.00px;color:#50575e;transform:scaleX(0.9754);transform-origin:0 0;">Product cat</div>
<div class="a" style="left:849.00px;top:472.70px;width:9.80px;height:9.80px;background:#fff;border:1px solid #646970;border-radius:2px"></div>
<div class="a" style="left:863.00px;top:471.00px;font-size:12.00px;line-height:12.00px;color:#50575e;transform:scaleX(0.9754);transform-origin:0 0;">Product cat</div>
<div class="a" style="left:849.00px;top:487.40px;width:9.80px;height:9.80px;background:#fff;border:1px solid #646970;border-radius:2px"></div>
<div class="a" style="left:863.00px;top:486.00px;font-size:12.00px;line-height:12.00px;color:#50575e;transform:scaleX(0.9754);transform-origin:0 0;">Product cat</div>
<div class="a" style="left:849.00px;top:502.90px;width:9.80px;height:9.80px;background:#fff;border:1px solid #646970;border-radius:2px"></div>
<div class="a" style="left:863.00px;top:501.00px;font-size:12.00px;line-height:12.00px;color:#50575e;transform:scaleX(0.9754);transform-origin:0 0;">Product cat</div>
<div class="a" style="left:849.00px;top:517.00px;width:9.80px;height:9.80px;background:#fff;border:1px solid #646970;border-radius:2px"></div>
<div class="a" style="left:863.00px;top:515.00px;font-size:12.00px;line-height:12.00px;color:#50575e;transform:scaleX(0.9754);transform-origin:0 0;">Product cat</div>
<div class="a" style="left:861.10px;top:531.60px;width:9.40px;height:9.00px;background:#fff;border:1px solid #646970;border-radius:2px"></div>
<div class="a" style="left:880.25px;top:531.00px;font-size:12.00px;line-height:12.00px;color:#50575e;transform:scaleX(0.9846);transform-origin:0 0;">Product child cat</div>
<div class="a" style="left:841.00px;top:560.00px;font-size:8.50px;line-height:8.50px;color:#2166ab;font-weight:bold;transform:scaleX(1.0546);transform-origin:0 0;text-decoration:underline;">+ Add new category</div>
<div class="a" style="left:832.20px;top:598.90px;width:179.70px;height:110.40px;background:#fff;border:1px solid #c3c4c7"></div>
<div class="a" style="left:833.20px;top:623.30px;width:177.70px;height:1.00px;background:#dcdcde"></div>
<div class="a" style="left:841.00px;top:607.00px;font-size:9.00px;line-height:9.00px;color:#1d2327;font-weight:bold;transform:scaleX(1.0508);transform-origin:0 0;">Product tags</div>
<svg class="a" style="left:996.60px;top:608.50px;" width="6.50" height="4.50" viewBox="0 0 6.5 4.5"><path d="M0 4.5 H6.5 L3.25 0 Z" fill="#3c434a"/></svg>
<div class="a" style="left:841.00px;top:632.10px;width:115.20px;height:18.60px;background:#fff;border:1px solid #8c8f94;border-radius:3px"></div>
<div class="a" style="left:959.20px;top:632.10px;width:30.80px;height:18.60px;background:#edf1f6;border:1px solid #2166ab;border-radius:3px"></div>
<div class="a" style="left:966.60px;top:637.00px;font-size:8.50px;line-height:8.50px;color:#2166ab;transform:scaleX(1.0316);transform-origin:0 0;">Add</div>
<div class="a" style="left:841.00px;top:661.00px;font-size:8.50px;line-height:8.50px;color:#50575e;font-style:italic;transform:scaleX(1.0726);transform-origin:0 0;">Separate tags with commas</div>
<div class="a" style="left:841.00px;top:691.00px;font-size:8.50px;line-height:8.50px;color:#2166ab;transform:scaleX(1.0859);transform-origin:0 0;text-decoration:underline;">Choose from the most used tags</div>
<div class="a" style="left:832.20px;top:724.20px;width:179.70px;height:61.10px;background:#fff;border:1px solid #c3c4c7"></div>
<div class="a" style="left:833.20px;top:747.60px;width:177.70px;height:1.00px;background:#dcdcde"></div>
<div class="a" style="left:841.00px;top:732.00px;font-size:9.00px;line-height:9.00px;color:#1d2327;font-weight:bold;transform:scaleX(1.0462);transform-origin:0 0;">Product image</div>
<svg class="a" style="left:996.60px;top:733.30px;" width="6.50" height="4.50" viewBox="0 0 6.5 4.5"><path d="M0 4.5 H6.5 L3.25 0 Z" fill="#3c434a"/></svg>
<div class="a" style="left:841.00px;top:759.00px;font-size:8.50px;line-height:8.50px;color:#2166ab;transform:scaleX(1.0843);transform-origin:0 0;text-decoration:underline;">Set product image</div>
<div class="a" style="left:832.20px;top:800.40px;width:179.70px;height:53.90px;background:#fff;border:1px solid #c3c4c7"></div>
<div class="a" style="left:833.20px;top:823.40px;width:177.70px;height:1.00px;background:#dcdcde"></div>
<div class="a" style="left:841.00px;top:808.00px;font-size:9.00px;line-height:9.00px;color:#1d2327;font-weight:bold;transform:scaleX(1.0531);transform-origin:0 0;">Product gallery</div>
<svg class="a" style="left:996.60px;top:809.30px;" width="6.50" height="4.50" viewBox="0 0 6.5 4.5"><path d="M0 4.5 H6.5 L3.25 0 Z" fill="#3c434a"/></svg>
<div class="a" style="left:841.00px;top:835.00px;font-size:8.50px;line-height:8.50px;color:#2166ab;transform:scaleX(1.0903);transform-origin:0 0;text-decoration:underline;">Add product gallery images</div>
<div class="a" style="left:299.90px;top:106.00px;font-size:14.50px;line-height:14.50px;color:#fc0a1e;">Product name</div>
<div class="a" style="left:139.10px;top:296.00px;font-size:15.00px;line-height:15.00px;color:#fc0a1e;">Product long description</div>
<div class="a" style="left:627.20px;top:298.00px;font-size:15.00px;line-height:15.00px;color:#fc0a1e;transform:scaleX(0.9898);transform-origin:0 0;">When you’re done</div>
<div class="a" style="left:627.20px;top:317.00px;font-size:15.00px;line-height:15.00px;color:#fc0a1e;transform:scaleX(1.0214);transform-origin:0 0;">editing or adding</div>
<div class="a" style="left:627.20px;top:337.00px;font-size:15.00px;line-height:15.00px;color:#fc0a1e;">content remember</div>
<div class="a" style="left:627.20px;top:357.00px;font-size:15.00px;line-height:15.00px;color:#fc0a1e;transform:scaleX(1.0115);transform-origin:0 0;">to hit publish or</div>
<div class="a" style="left:627.20px;top:376.00px;font-size:15.00px;line-height:15.00px;color:#fc0a1e;transform:scaleX(0.9832);transform-origin:0 0;">update!</div>
<div class="a" style="left:625.80px;top:426.00px;font-size:15.00px;line-height:15.00px;color:#fc0a1e;transform:scaleX(0.9771);transform-origin:0 0;">Product categories</div>
<div class="a" style="left:625.80px;top:624.00px;font-size:15.00px;line-height:15.00px;color:#fc0a1e;transform:scaleX(0.9702);transform-origin:0 0;">Product tags</div>
<div class="a" style="left:625.80px;top:700.00px;font-size:15.00px;line-height:15.00px;color:#fc0a1e;transform:scaleX(0.9851);transform-origin:0 0;">Product featured image</div>
<div class="a" style="left:630.70px;top:763.00px;font-size:15.00px;line-height:15.00px;color:#fc0a1e;transform:scaleX(0.9878);transform-origin:0 0;">Product image gallery</div>
<div class="a" style="left:366.30px;top:562.00px;font-size:15.00px;line-height:15.00px;color:#fc0a1e;transform:scaleX(0.9844);transform-origin:0 0;">Product price</div>
<div class="a" style="left:366.30px;top:594.00px;font-size:15.00px;line-height:15.00px;color:#fc0a1e;transform:scaleX(0.9703);transform-origin:0 0;">Product sale price</div>
<div class="a" style="left:139.30px;top:926.00px;font-size:15.00px;line-height:15.00px;color:#fc0a1e;transform:scaleX(0.9891);transform-origin:0 0;">Product short description</div>
<svg class="a" style="left:0;top:0" width="1024" height="963" viewBox="0 0 1024 963">
<path d="M291.70 113.20 L232.52 146.02" stroke="#fc0a1e" stroke-width="2.40" stroke-linecap="round"/><polygon points="225.70,149.80 231.36,141.86 235.43,149.21" fill="#fc0a1e"/>
<path d="M766.25 342.30 L935.78 366.02" stroke="#fc0a1e" stroke-width="2.40" stroke-linecap="round"/><polygon points="943.50,367.10 934.20,370.04 935.37,361.72" fill="#fc0a1e"/>
<path d="M766.00 437.50 L827.05 449.50" stroke="#fc0a1e" stroke-width="2.40" stroke-linecap="round"/><polygon points="834.70,451.00 825.26,453.42 826.87,445.18" fill="#fc0a1e"/>
<path d="M729.10 637.00 L826.96 648.86" stroke="#fc0a1e" stroke-width="2.40" stroke-linecap="round"/><polygon points="834.70,649.80 825.46,652.91 826.47,644.57" fill="#fc0a1e"/>
<path d="M791.30 721.40 L831.23 752.23" stroke="#fc0a1e" stroke-width="2.40" stroke-linecap="round"/><polygon points="837.40,757.00 827.87,754.95 833.00,748.30" fill="#fc0a1e"/>
<path d="M783.00 781.60 L829.59 828.28" stroke="#fc0a1e" stroke-width="2.40" stroke-linecap="round"/><polygon points="835.10,833.80 825.91,830.54 831.86,824.60" fill="#fc0a1e"/>
</svg>
<div class="a" style="left:420.00px;top:940.00px;width:640.00px;height:60.00px;border-radius:34px 0 0 0;background:rgba(0,0,0,0.014);filter:blur(4px)"></div>
</body></html>
